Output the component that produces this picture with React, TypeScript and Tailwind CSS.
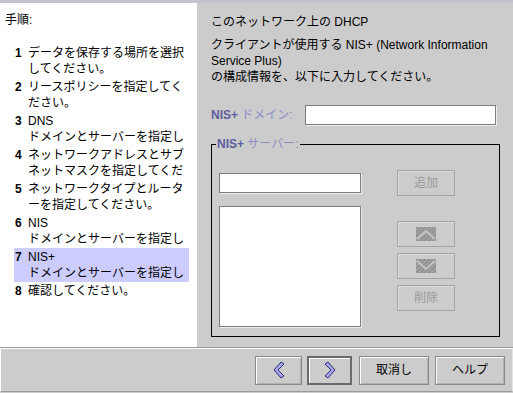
import React from 'react';

const steps: { n: number; lines: string[] }[] = [
  { n: 1, lines: ['データを保存する場所を選択', 'してください。'] },
  { n: 2, lines: ['リースポリシーを指定してく', 'ださい。'] },
  { n: 3, lines: ['DNS', 'ドメインとサーバーを指定し'] },
  { n: 4, lines: ['ネットワークアドレスとサブ', 'ネットマスクを指定してくだ'] },
  { n: 5, lines: ['ネットワークタイプとルータ', 'ーを指定してください。'] },
  { n: 6, lines: ['NIS', 'ドメインとサーバーを指定し'] },
  { n: 7, lines: ['NIS+', 'ドメインとサーバーを指定し'] },
  { n: 8, lines: ['確認してください。'] },
];

const font = 'font-["Liberation_Sans","Noto_Sans_CJK_JP",sans-serif]';

function Chevron({ dir }: { dir: 'left' | 'right' }) {
  const pts = dir === 'left' ? '8,1 11,3 5,9 11,15 8,17 1,9' : '4,1 1,3 7,9 1,15 4,17 11,9';
  return (
    <svg width="12" height="18" viewBox="0 0 12 18">
      <polygon points={pts} fill="#a4a4f0" stroke="#30306a" strokeWidth="1" strokeLinejoin="round" />
    </svg>
  );
}

function HatchArrow({ dir }: { dir: 'up' | 'down' }) {
  const line = dir === 'up' ? '1,12 10,4 19,12' : '1,2 10,10 19,2';
  return (
    <svg width="20" height="14" viewBox="0 0 20 14">
      <defs>
        <pattern id={`h-${dir}`} width="3" height="3" patternUnits="userSpaceOnUse" patternTransform="rotate(45)">
          <rect width="3" height="3" fill="#a8a8a8" />
          <rect width="1.5" height="3" fill="#8c8c8c" />
        </pattern>
      </defs>
      <rect x="0" y="0" width="20" height="14" fill={`url(#h-${dir})`} />
      <polyline points={line} fill="none" stroke="#c4c4c4" strokeWidth="2" />
    </svg>
  );
}

function SideButton({ children, className = '' }: { children: React.ReactNode; className?: string }) {
  return (
    <div
      className={`w-[58px] h-[26px] flex items-center justify-center border border-[#a4a4a4] shadow-[inset_1px_1px_0_#dcdcdc] text-[12px] text-[#9a9a9a] ${className}`}
    >
      {children}
    </div>
  );
}

function NavButton({ children, w, primary = false }: { children: React.ReactNode; w: string; primary?: boolean }) {
  return (
    <div
      className={`${w} h-[29px] flex items-center justify-center bg-[#cccccc] text-[12px] text-black ${
        primary
          ? 'border-2 border-[#6a6a6a] shadow-[inset_1px_1px_0_#ffffff]'
          : 'border border-[#8a8a8a] shadow-[inset_1px_1px_0_#ffffff,inset_-1px_-1px_0_#b0b0b0]'
      }`}
    >
      {children}
    </div>
  );
}

export default function App() {
  return (
    <div className={`w-[513px] h-[393px] bg-[#cccccc] flex flex-col overflow-hidden ${font}`}>
      <div className="h-[3px] bg-[#c4c4cc]" />
      <div className="flex h-[344px]">
        {/* steps */}
        <div className="w-[197px] bg-white pt-[9px] overflow-hidden">
          <div className="pl-[5px] text-[12px] leading-[16px] text-black">手順:</div>
          <div className="mt-[16px]">
            {steps.map((s) => (
              <div
                key={s.n}
                className={`ml-[14px] w-[175px] h-[34px] py-[1px] flex text-[12px] leading-[16px] text-black ${
                  s.n === 7 ? 'bg-[#ccccff]' : ''
                }`}
              >
                <span className="w-[14px] pl-[1px] font-bold">{s.n}</span>
                <div className="whitespace-nowrap">
                  {s.lines.map((l) => (
                    <div key={l}>{l}</div>
                  ))}
                </div>
              </div>
            ))}
          </div>
        </div>

        {/* form */}
        <div className="flex-1 pl-[14px] pt-[11px] text-[12px] leading-[16px] text-black whitespace-nowrap">
          <div>このネットワーク上の DHCP</div>
          <div className="mt-[7px]">クライアントが使用する NIS+ (Network Information</div>
          <div>Service Plus)</div>
          <div>の構成情報を、以下に入力してください。</div>

          <div className="mt-[20px] flex items-center h-[20px]">
            <span className="w-[94px]">
              <span className="font-bold text-[#5e5e9c]">NIS+</span>
              <span className="text-[#8c8cc4]"> ドメイン:</span>
            </span>
            <div className="w-[191px] h-[20px] bg-white border border-[#7c7c7c] shadow-[1px_1px_0_#eeeeee]" />
          </div>

          <div className="relative mt-[19px] w-[289px] h-[193px] border border-black pt-[25px] pl-[7px] flex">
            <div className="absolute -top-[9px] left-[4px] px-[1px] bg-[#cccccc] leading-[16px]">
              <span className="font-bold text-[#5e5e9c]">NIS+</span>
              <span className="text-[#8c8cc4]"> サーバー:</span>
            </div>
            <div className="mt-[3px] w-[142px]">
              <div className="h-[20px] bg-white border border-[#7c7c7c] shadow-[1px_1px_0_#eeeeee]" />
              <div className="mt-[13px] h-[121px] bg-white border border-[#7c7c7c] shadow-[1px_1px_0_#eeeeee]" />
            </div>
            <div className="ml-[36px] flex flex-col">
              <SideButton>追加</SideButton>
              <SideButton className="mt-[25px]">
                <HatchArrow dir="up" />
              </SideButton>
              <SideButton className="mt-[6px]">
                <HatchArrow dir="down" />
              </SideButton>
              <SideButton className="mt-[6px]">削除</SideButton>
            </div>
          </div>
        </div>
      </div>

      {/* bottom bar */}
      <div className="h-[46px] border-t border-[#9a9a9a]">
        <div className="h-[44px] border-t border-l border-white border-b border-b-[#9a9a9a] border-r border-r-[#e4e4e4] flex items-center justify-end pr-[7px]">
          <NavButton w="w-[47px]">
            <Chevron dir="left" />
          </NavButton>
          <div className="w-[5px]" />
          <NavButton w="w-[45px]" primary>
            <Chevron dir="right" />
          </NavButton>
          <div className="w-[7px]" />
          <NavButton w="w-[70px]">取消し</NavButton>
          <div className="w-[6px]" />
          <NavButton w="w-[70px]">ヘルプ</NavButton>
        </div>
      </div>
    </div>
  );
}
